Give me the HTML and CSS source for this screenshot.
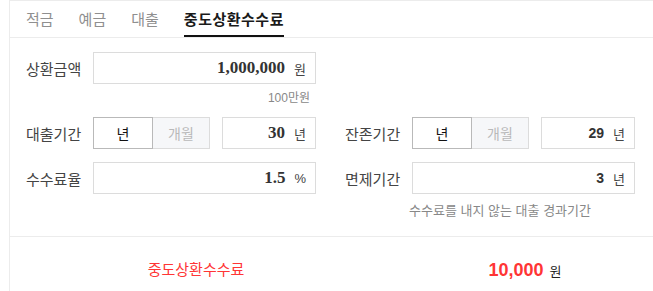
FILE: index.html
```html
<!DOCTYPE html>
<html lang="ko">
<head>
<meta charset="utf-8">
<title>중도상환수수료 계산기</title>
<link rel="stylesheet" href="styles.css">
</head>
<body>
<div class="calc">
  <nav class="tabs">
    <a class="tab">적금</a>
    <a class="tab">예금</a>
    <a class="tab">대출</a>
    <a class="tab active">중도상환수수료</a>
  </nav>

  <div class="form">
    <div class="row">
      <div class="field">
        <span class="label">상환금액</span>
        <div class="box"><span class="val serif">1,000,000</span><span class="unit">원</span></div>
      </div>
      <div></div>
    </div>
    <div class="row hint-row">
      <div class="hint hint-left">100만원</div>
      <div></div>
    </div>

    <div class="row row-2">
      <div class="field">
        <span class="label">대출기간</span>
        <div class="split">
          <div class="toggle"><span class="seg on">년</span><span class="seg">개월</span></div>
          <div class="box"><span class="val serif">30</span><span class="unit">년</span></div>
        </div>
      </div>
      <div class="field">
        <span class="label">잔존기간</span>
        <div class="split">
          <div class="toggle"><span class="seg on">년</span><span class="seg">개월</span></div>
          <div class="box"><span class="val sans">29</span><span class="unit">년</span></div>
        </div>
      </div>
    </div>

    <div class="row row-3">
      <div class="field">
        <span class="label">수수료율</span>
        <div class="box"><span class="val serif">1.5</span><span class="unit">%</span></div>
      </div>
      <div class="field">
        <span class="label">면제기간</span>
        <div class="box"><span class="val sans">3</span><span class="unit">년</span></div>
      </div>
    </div>
    <div class="row hint-row2">
      <div></div>
      <div class="hint hint-right">수수료를 내지 않는 대출 경과기간</div>
    </div>
  </div>

  <div class="result">
    <div class="result-label">중도상환수수료</div>
    <div class="result-value"><strong>10,000</strong><span class="result-unit">원</span></div>
  </div>
</div>
</body>
</html>
```

FILE: styles.css
```css
html, body {
  margin: 0;
  padding: 0;
  background: #fff;
  overflow: hidden;
}

body {
  font-family: "Liberation Sans", "Noto Sans CJK KR", sans-serif;
  color: #333;
}

.calc {
  margin-left: 9px;
  border-top: 1px solid #ececec;
  border-left: 1px solid #ececec;
  min-height: 300px;
}

.tabs {
  display: flex;
  padding-left: 16px;
  height: 36px;
  border-bottom: 1px solid #ececec;
}

.tab {
  display: block;
  margin-right: 25px;
  padding-top: 4px;
  height: 30px;
  line-height: 30px;
  font-size: 15px;
  color: #8f8f8f;
  border-bottom: 2px solid transparent;
}

.tab.active {
  color: #1a1a1a;
  font-weight: bold;
  letter-spacing: 0.5px;
  border-bottom-color: #111;
}

.form {
  padding: 14px 0 18px 16px;
  border-bottom: 1px solid #ececec;
}

.row {
  display: grid;
  grid-template-columns: 290px 290px;
  column-gap: 29px;
}

.row-2 { margin-top: 12px; }
.row-3 { margin-top: 13px; }

.field {
  display: flex;
  align-items: center;
}

.label {
  width: 67px;
  flex: none;
  font-size: 15px;
  color: #444;
}

.box {
  flex: 1;
  height: 32px;
  box-sizing: border-box;
  border: 1px solid #dcdcdc;
  display: flex;
  align-items: center;
  justify-content: flex-end;
  padding-right: 9px;
}

.val {
  font-weight: bold;
  color: #333;
}

.val.serif {
  font-family: "Liberation Serif", serif;
  font-size: 17px;
}

.val.sans {
  font-family: "Liberation Sans", sans-serif;
  font-size: 14px;
}

.unit {
  margin-left: 9px;
  font-size: 13px;
  color: #444;
}

.split {
  flex: 1;
  display: flex;
  gap: 12px;
}

.toggle {
  display: flex;
  width: 117px;
  flex: none;
}

.seg {
  height: 32px;
  box-sizing: border-box;
  display: flex;
  align-items: center;
  justify-content: center;
  font-size: 14px;
  flex: 1;
  background: #f6f7f9;
  color: #b9b9b9;
  border: 1px solid #dcdcdc;
  border-left: none;
}

.seg.on {
  flex: 0 0 60px;
  background: #fff;
  color: #111;
  border: 1px solid #b9b9b9;
}

.hint {
  font-size: 12px;
  line-height: 14px;
  color: #888;
}

.hint-row { margin-top: 7px; }
.hint-left { text-align: right; padding-right: 6px; }

.hint-row2 { margin-top: 10px; }
.hint-right { font-size: 13px; text-align: right; padding-right: 44px; }

.result {
  display: grid;
  grid-template-columns: 340px 318px;
  padding: 21px 0 0 16px;
  line-height: 24px;
}

.result-label {
  text-align: center;
  font-size: 15px;
  color: #ff3535;
}

.result-value {
  text-align: center;
  color: #222;
}

.result-value strong {
  font-size: 18px;
  color: #ff3535;
}

.result-unit {
  margin-left: 6px;
  font-size: 13px;
}
```
